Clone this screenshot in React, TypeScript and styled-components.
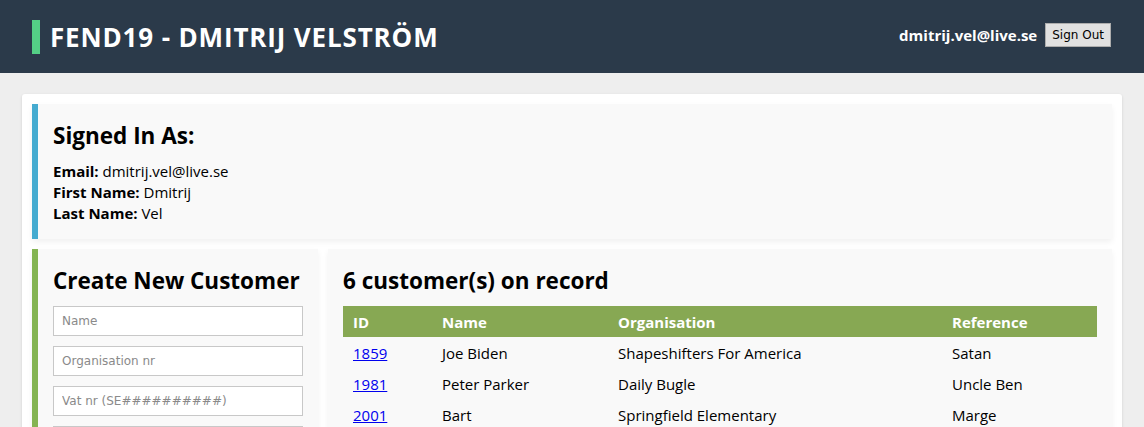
import React from "react";
import styled, { createGlobalStyle } from "styled-components";

const Global = createGlobalStyle`
  html, body { margin: 0; padding: 0; }
  body {
    background: #eeeeee;
    font-family: "Open Sans", "Noto Sans", sans-serif;
    color: #000;
  }
`;

const Header = styled.header`
  height: 73px;
  background: #2b3a4a;
  display: flex;
  align-items: center;
  justify-content: space-between;
  padding: 0 33px 0 32px;
`;

const Title = styled.h1`
  margin: 0;
  display: flex;
  align-items: center;
  gap: 10px;
  color: #fff;
  font-size: 26px;
  font-weight: 700;
  letter-spacing: 0.85px;
  &::before {
    content: "";
    width: 8px;
    height: 34px;
    background: #54cf86;
  }
`;

const UserBox = styled.div`
  display: flex;
  align-items: center;
  gap: 8px;
  margin-top: -4px;
`;

const UserEmail = styled.span`
  color: #fff;
  font-weight: 700;
  font-size: 15px;
`;

const SignOut = styled.button`
  font-family: "DejaVu Sans", Tahoma, sans-serif;
  font-size: 12px;
  padding: 3px 6px;
  background: #e1e1e1;
  border: 1px solid #adadad;
  color: #000;
  height: 24px;
`;

const Card = styled.main`
  margin: 21px 22px 0;
  background: #fff;
  border-radius: 3px;
  box-shadow: 0 1px 3px rgba(0, 0, 0, 0.12);
  padding: 10px 10px 20px;
  display: flex;
  flex-direction: column;
  gap: 10px;
`;

const Panel = styled.section<{ $accent?: string; $grow?: boolean }>`
  background: #f9f9f9;
  border-left: ${(p) => (p.$accent ? `6px solid ${p.$accent}` : "none")};
  padding: 15px;
  box-shadow: 0 3px 6px rgba(0, 0, 0, 0.06);
  flex: ${(p) => (p.$grow ? "1" : "none")};
`;

const Row = styled.div`
  display: flex;
  gap: 10px;
  align-items: stretch;
`;

const H2 = styled.h2`
  margin: 0 0 8px;
  font-size: 22.5px;
  font-weight: 700;
  line-height: 34px;
  white-space: nowrap;
`;

const InfoLine = styled.div`
  font-size: 15px;
  line-height: 21px;
  b { font-weight: 700; }
`;

const Form = styled.form`
  display: flex;
  flex-direction: column;
  gap: 10px;
`;

const Input = styled.input`
  box-sizing: border-box;
  width: 250px;
  height: 30px;
  border: 1px solid #c8c8c8;
  background: #fff;
  padding: 0 8px;
  font-family: "DejaVu Sans", Tahoma, sans-serif;
  font-size: 12px;
  &::placeholder { color: #8a8a8a; }
`;

const Table = styled.table`
  width: 100%;
  border-collapse: collapse;
  table-layout: fixed;
  font-size: 15px;
`;

const Th = styled.th<{ $w?: number }>`
  box-sizing: border-box;
  background: #87a853;
  color: #fff;
  text-align: left;
  font-weight: 700;
  height: 31px;
  padding: 0 10px;
  width: ${(p) => (p.$w ? `${p.$w}px` : "auto")};
`;

const Td = styled.td`
  height: 31px;
  padding: 0 10px;
  white-space: nowrap;
`;

const IdLink = styled.a`
  color: #0000ee;
  text-decoration: underline;
`;

const customers = [
  { id: 1859, name: "Joe Biden", org: "Shapeshifters For America", ref: "Satan" },
  { id: 1981, name: "Peter Parker", org: "Daily Bugle", ref: "Uncle Ben" },
  { id: 2001, name: "Bart", org: "Springfield Elementary", ref: "Marge" },
  { id: 2020, name: "Tony Stark", org: "Stark Industries", ref: "Pepper" },
  { id: 2077, name: "V", org: "Arasaka", ref: "Johnny" },
  { id: 3000, name: "Fry", org: "Planet Express", ref: "Leela" },
];

export default function App() {
  return (
    <>
      <Global />
      <Header>
        <Title>FEND19 - DMITRIJ VELSTRÖM</Title>
        <UserBox>
          <UserEmail>dmitrij.vel@live.se</UserEmail>
          <SignOut>Sign Out</SignOut>
        </UserBox>
      </Header>
      <Card>
        <Panel $accent="#45abd0">
          <H2>Signed In As:</H2>
          <InfoLine><b>Email:</b> dmitrij.vel@live.se</InfoLine>
          <InfoLine><b>First Name:</b> Dmitrij</InfoLine>
          <InfoLine><b>Last Name:</b> Vel</InfoLine>
        </Panel>
        <Row>
          <Panel $accent="#84b452">
            <H2>Create New Customer</H2>
            <Form>
              <Input placeholder="Name" />
              <Input placeholder="Organisation nr" />
              <Input placeholder="Vat nr (SE##########)" />
              <Input placeholder="Reference" />
            </Form>
          </Panel>
          <Panel $grow>
            <H2>6 customer(s) on record</H2>
            <Table>
              <thead>
                <tr>
                  <Th $w={89}>ID</Th>
                  <Th $w={176}>Name</Th>
                  <Th $w={334}>Organisation</Th>
                  <Th>Reference</Th>
                </tr>
              </thead>
              <tbody>
                {customers.map((c) => (
                  <tr key={c.id}>
                    <Td><IdLink href="#">{c.id}</IdLink></Td>
                    <Td>{c.name}</Td>
                    <Td>{c.org}</Td>
                    <Td>{c.ref}</Td>
                  </tr>
                ))}
              </tbody>
            </Table>
          </Panel>
        </Row>
      </Card>
    </>
  );
}
